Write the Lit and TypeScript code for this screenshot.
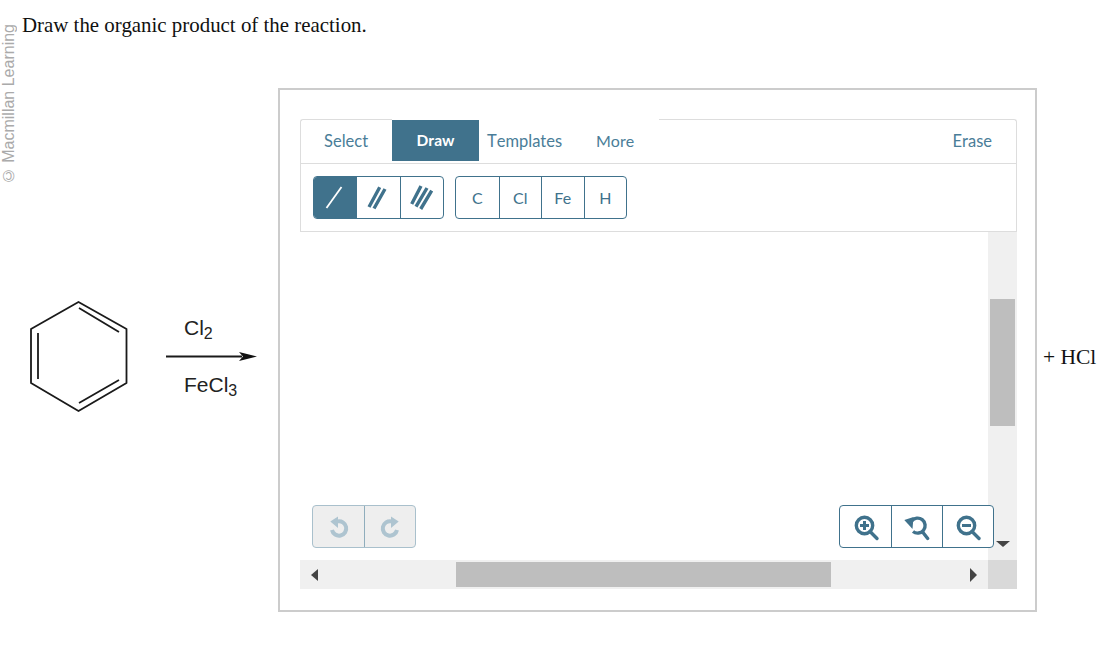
import { html, css, LitElement, svg } from "lit";
import { customElement, state } from "lit/decorators.js";

const bondIcons = [
	svg`<path d="M11.500 31 26.500 10" stroke="#fff" stroke-width="1.8" />`,
	svg`<path d="M11 30 21.700 10.300M16 31.500 27 12" stroke="#40728c" stroke-width="3.4" />`,
	svg`<path d="M9.700 27 19 9M14 29.700 25 11M18.700 32 29.700 13.700" stroke="#40728c" stroke-width="3.4" />`,
];

const atoms = ["C", "Cl", "Fe", "H"];

@customElement("app-root")
export class AppRoot extends LitElement {
	static styles = css`
		:host {
			display: block;
			position: relative;
			height: 667px;
			overflow: hidden;
			background: #fff;
		}
		.watermark {
			position: absolute;
			left: 0;
			top: 24px;
			writing-mode: vertical-rl;
			transform: rotate(180deg);
			font: 16px/17px "Liberation Sans", sans-serif;
			color: #aaa;
			white-space: nowrap;
		}
		.question {
			height: 88px;
			box-sizing: border-box;
			padding: 13px 0 0 22px;
			font: 20.9px/24px "Liberation Serif", serif;
			color: #111;
		}
		.row {
			display: flex;
		}
		.reaction {
			width: 278px;
			height: 524px;
			flex: none;
		}
		.reaction text {
			font: 21px "Liberation Sans", sans-serif;
			fill: #222;
		}
		.reaction .sub {
			font-size: 16px;
		}
		.frame {
			width: 759px;
			height: 524px;
			flex: none;
			box-sizing: border-box;
			border: 2px solid #ccc;
			padding: 29px 18px 21px 20px;
			display: flex;
			flex-direction: column;
			font-family: "Lato", sans-serif;
		}
		.byproduct {
			margin: 257px 0 0 6px;
			font: 21.5px/24px "Liberation Serif", serif;
			color: #111;
			white-space: nowrap;
		}
		.tabs {
			display: flex;
			height: 45px;
			flex: none;
			box-sizing: border-box;
			border-bottom: 1px solid #ddd;
			font-size: 16.5px;
			font-kerning: none;
			color: #4a7d98;
		}
		.tab {
			box-sizing: border-box;
			height: 41px;
			margin-top: 1px;
			line-height: 42px;
		}
		.select {
			width: 92px;
			margin-top: 0;
			height: 44px;
			padding-left: 23px;
			border: 1px solid #ddd;
			border-width: 1px 0 0 1px;
			border-top-left-radius: 3px;
		}
		.draw {
			width: 87px;
			text-align: center;
			background: #40728c;
			color: #fff;
			font-size: 15.5px;
			font-weight: 700;
			line-height: 40px;
		}
		.templates {
			width: 117px;
			padding-left: 8px;
		}
		.more {
			width: 63px;
			font-size: 16px;
		}
		.rest {
			flex: 1;
			height: 44px;
			box-sizing: border-box;
			border: 1px solid #ddd;
			border-width: 1px 1px 0 0;
			border-top-right-radius: 3px;
			text-align: right;
			padding-right: 24px;
			line-height: 43px;
		}
		.toolbar {
			display: flex;
			gap: 11px;
			height: 68px;
			flex: none;
			box-sizing: border-box;
			padding: 12px;
			border: 1px solid #ddd;
			border-top: 0;
		}
		.group {
			display: flex;
			height: 43px;
			box-sizing: border-box;
			border: 1px solid #40728c;
			border-radius: 4px;
			overflow: hidden;
			background: #fff;
		}
		.group > div {
			display: flex;
			align-items: center;
			justify-content: center;
			box-sizing: border-box;
			border-left: 1px solid #40728c;
		}
		.group > div:first-child {
			border-left: 0;
		}
		.group svg {
			fill: none;
		}
		.bonds {
			width: 131px;
		}
		.bond {
			flex: 1 0 43px;
		}
		.bond.on {
			flex: 0 0 42px;
			background: #40728c;
		}
		.atom {
			width: 42.5px;
			font-size: 16px;
			line-height: 41px;
			color: #40728c;
			padding-bottom: 1px;
		}
		.canvas {
			position: relative;
			flex: 1;
			display: grid;
			grid-template-columns: 1fr 29px;
			grid-template-rows: 1fr 29px;
		}
		.vbar {
			background: #f0f0f0;
			padding: 67px 2px 0;
		}
		.vthumb {
			height: 127px;
			background: #bebebe;
		}
		.hbar {
			display: flex;
			align-items: center;
			background: #f0f0f0;
		}
		.hthumb {
			width: 375px;
			height: 25px;
			margin-left: 138px;
			background: #bebebe;
		}
		.arrow-left {
			margin-left: 11px;
			border: 6px solid transparent;
			border-left: 0;
			border-right: 7px solid #444;
			width: 0;
			height: 0;
			flex: none;
		}
		.arrow-right {
			margin-left: auto;
			margin-right: 11px;
			border: 7px solid transparent;
			border-right: 0;
			border-left: 7px solid #444;
			width: 0;
			height: 0;
		}
		.corner {
			background: #d9d9d9;
		}
		.arrow-down {
			position: absolute;
			left: 696px;
			top: 309px;
			border: 7px solid transparent;
			border-bottom: 0;
			border-top: 6px solid #444;
		}
		.history {
			position: absolute;
			left: 12px;
			top: 273px;
			border-color: #a9c0cc;
			background: #eee;
		}
		.history > div {
			width: 51px;
			border-color: #8fadbc;
		}
		.zoom {
			position: absolute;
			left: 539px;
			top: 273px;
		}
		.zoom > div {
			width: 51px;
		}
	`;

	@state() activeBond = 0;

	renderUndo(flip: boolean) {
		return html`<svg width="24" height="26" viewBox="0 0 24 26">
			<g transform=${flip ? "translate(24 0) scale(-1 1)" : ""}>
				<path d="M10.500 7.400A7.200 7.200 0 1 1 5 16" stroke="#aec4d0" stroke-width="4" />
				<path d="M11 2.500V14L3.300 7.500Z" fill="#aec4d0" />
			</g>
		</svg>`;
	}

	renderZoom(kind: string) {
		const teal = "#40728c";
		return html`<svg width="28" height="28" viewBox="0 0 28 28">
			${kind === "reset"
				? svg`<path d="M20 19.500 24.700 25.500" stroke=${teal} stroke-width="3.4" stroke-linecap="round" />
					<path d="M8.700 8A7.500 7.500 0 1 1 10 18.500" stroke=${teal} stroke-width="3.4" />
					<path d="M1.300 7 10.500 4 9.500 16Z" fill=${teal} />`
				: svg`<path d="M18 18.500 25 25.500" stroke=${teal} stroke-width="3.4" stroke-linecap="round" />
					<circle cx="12.500" cy="12.500" r="8.200" stroke=${teal} stroke-width="3.4" />
					<path d=${kind === "in" ? "M8 12.500H17M12.500 8V17" : "M8 12.500H17"} stroke=${teal} stroke-width="3" />`}
		</svg>`;
	}

	render() {
		return html`
			<div class="watermark">© Macmillan Learning</div>
			<div class="question">Draw the organic product of the reaction.</div>
			<div class="row">
				<svg class="reaction" viewBox="0 88 278 524">
					<g fill="none" stroke="#1a1a1a" stroke-width="1.8">
						<path d="M78.500 302 126.500 329V383L78.500 411 31 383V329Z" stroke-linejoin="round" />
						<path d="M38 333V379M79 308 119 332M79 403 119 380" />
					</g>
					<path d="M166 356.500H242" stroke="#1a1a1a" stroke-width="1.8" />
					<path d="M239 352 257 356.500 239 361 243 356.500Z" fill="#111" />
					<text x="184" y="335">Cl<tspan class="sub" dy="4">2</tspan></text>
					<text x="184" y="392">FeCl<tspan class="sub" dy="4">3</tspan></text>
				</svg>
				<div class="frame">
					<div class="tabs">
						<div class="tab select">Select</div>
						<div class="tab draw">Draw</div>
						<div class="tab templates">Templates</div>
						<div class="tab more">More</div>
						<div class="rest">Erase</div>
					</div>
					<div class="toolbar">
						<div class="group bonds">
							${bondIcons.map(
								(icon, i) =>
									html`<div class="bond ${i === this.activeBond ? "on" : ""}">
										<svg width="40" height="41" viewBox="0 0 40 41">${icon}</svg>
									</div>`
							)}
						</div>
						<div class="group">
							${atoms.map((atom) => html`<div class="atom">${atom}</div>`)}
						</div>
					</div>
					<div class="canvas">
						<div></div>
						<div class="vbar"><div class="vthumb"></div></div>
						<div class="hbar">
							<div class="arrow-left"></div>
							<div class="hthumb"></div>
							<div class="arrow-right"></div>
						</div>
						<div class="corner"></div>
						<div class="group history">
							<div>${this.renderUndo(false)}</div>
							<div>${this.renderUndo(true)}</div>
						</div>
						<div class="group zoom">
							<div>${this.renderZoom("in")}</div>
							<div>${this.renderZoom("reset")}</div>
							<div>${this.renderZoom("out")}</div>
						</div>
						<div class="arrow-down"></div>
					</div>
				</div>
				<div class="byproduct">+ HCl</div>
			</div>
		`;
	}
}
